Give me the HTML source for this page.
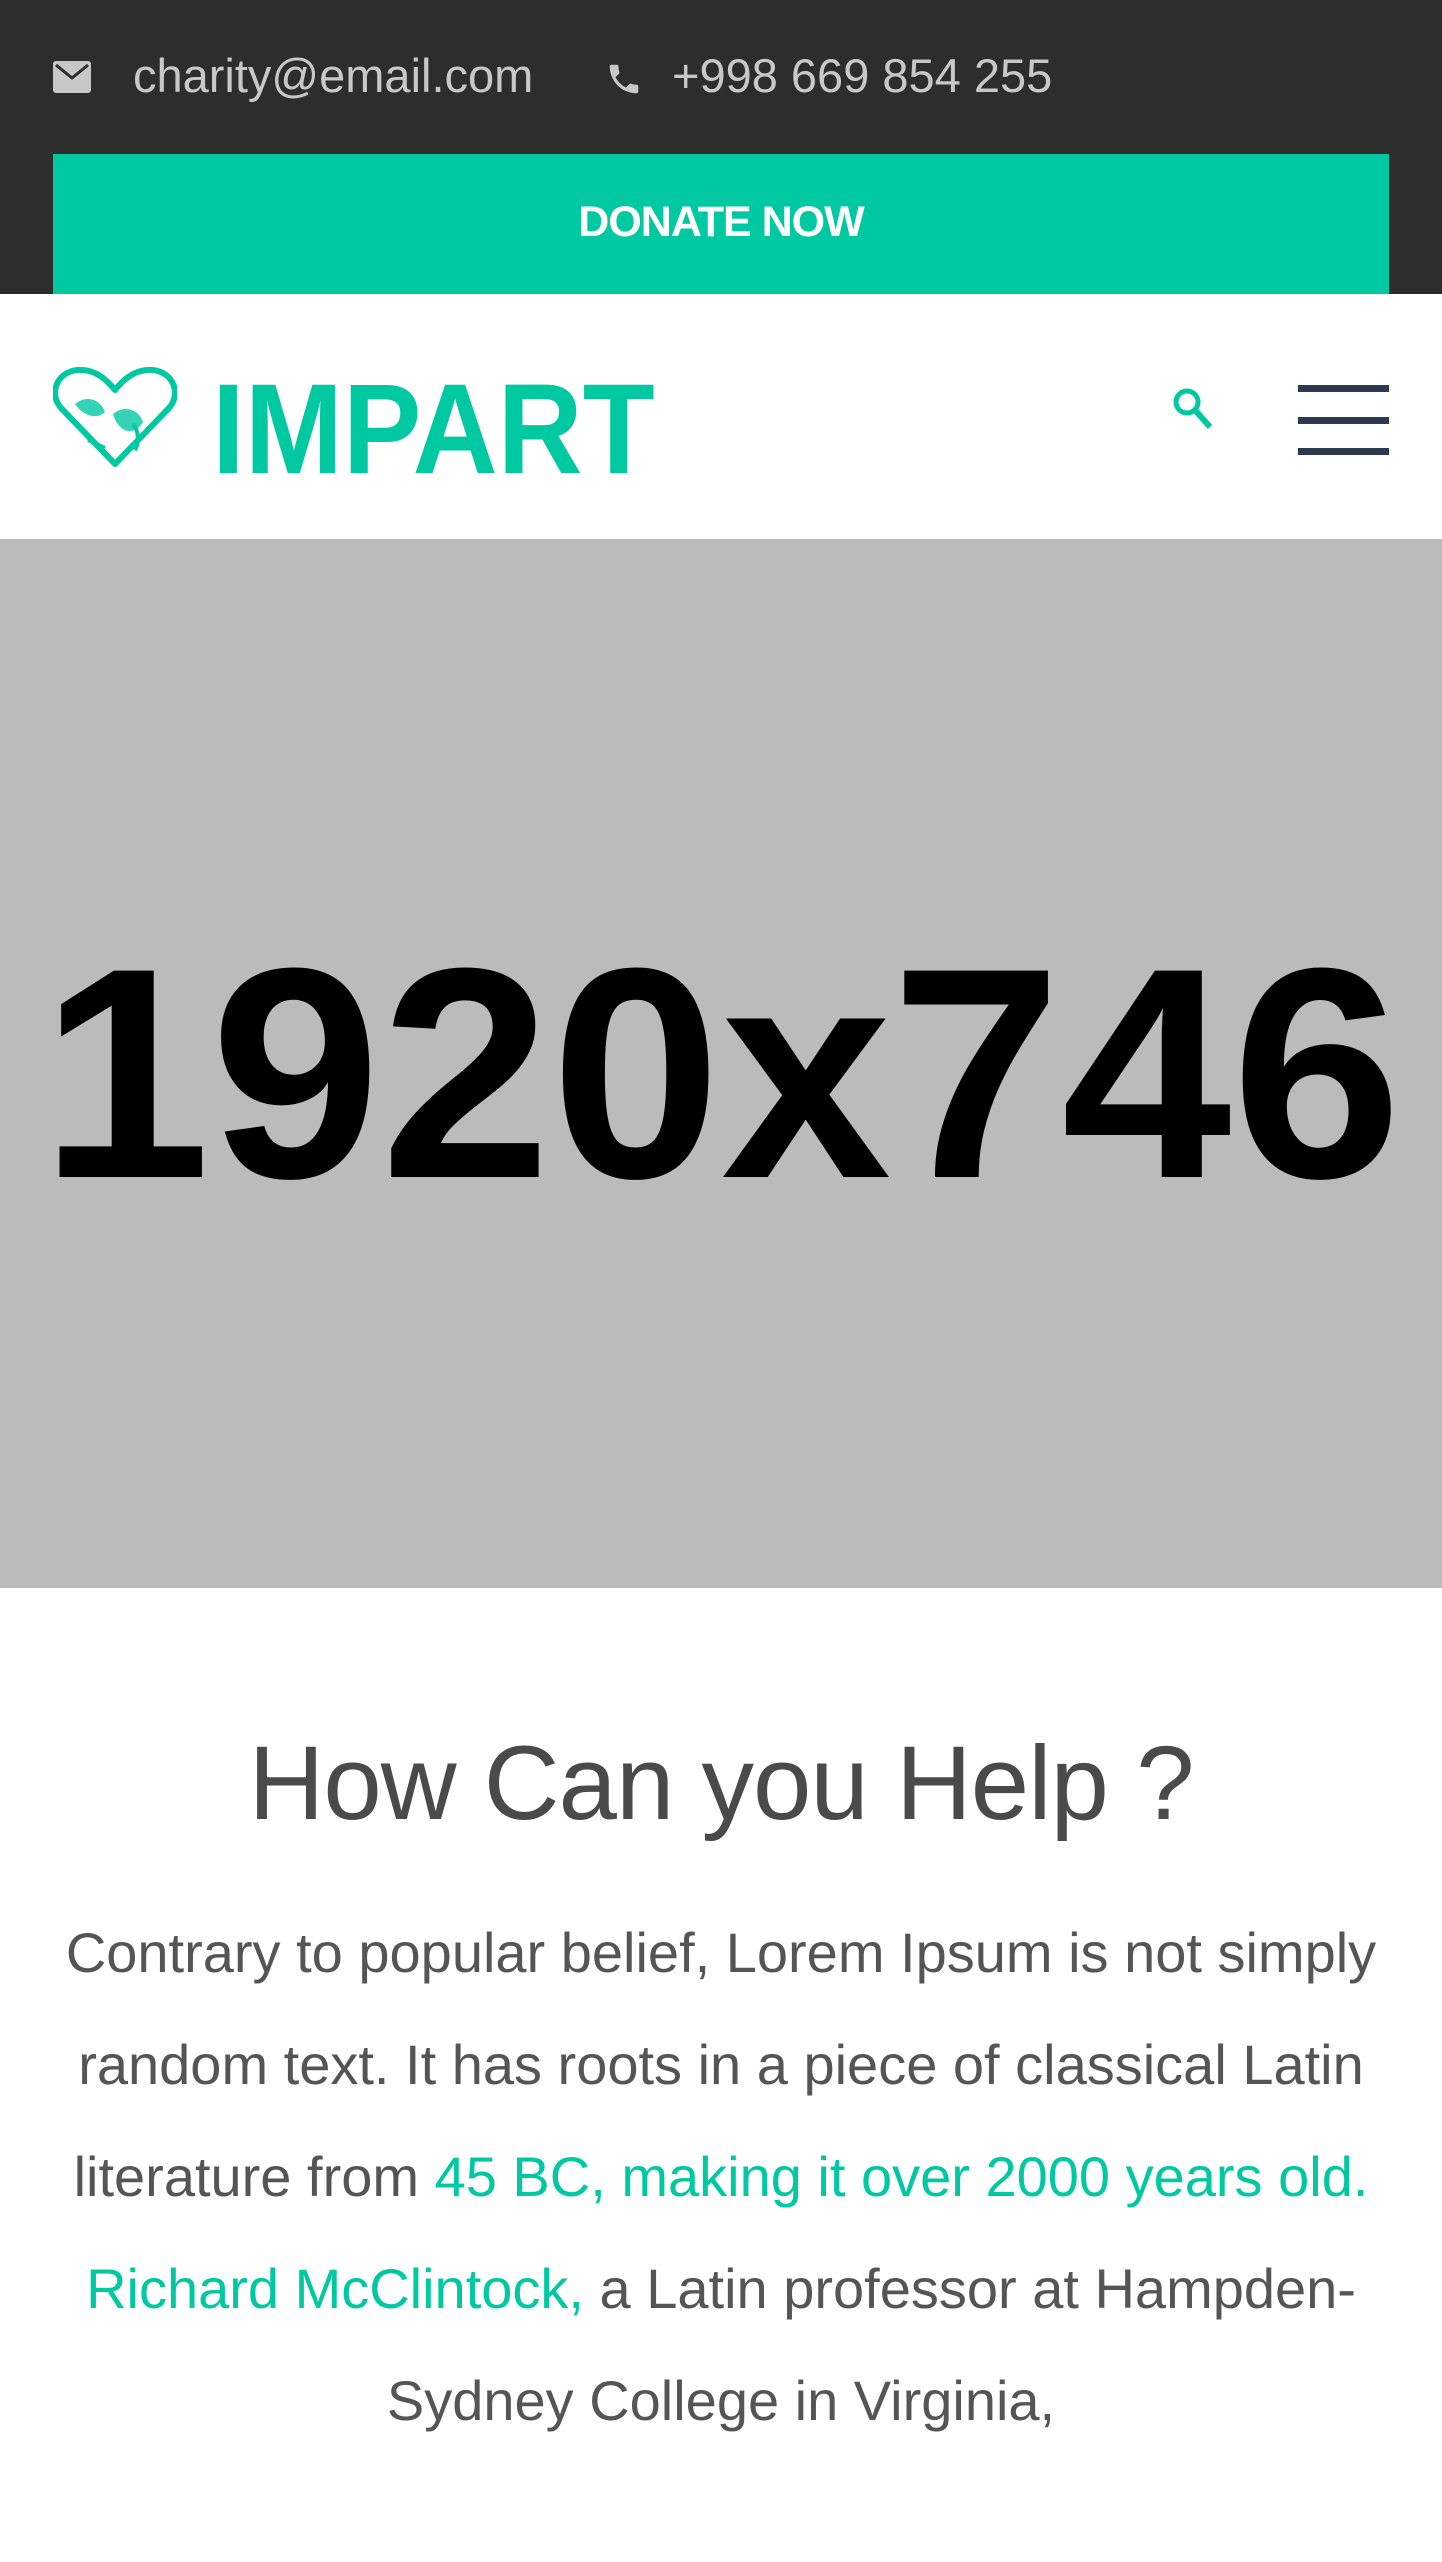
<!DOCTYPE html>
<html><head><meta charset="utf-8"><style>
*{margin:0;padding:0;box-sizing:border-box}
body{width:1442px;height:2562px;background:#fff;font-family:"Liberation Sans",sans-serif;overflow:hidden;position:relative}
.top{position:absolute;left:0;top:0;width:1442px;height:294px;background:#2d2d2d}
.t{position:absolute;color:#c8c8c8;font-size:47px;top:48px}
.btn{position:absolute;left:53px;top:154px;width:1336px;height:140px;background:#00c9a2;color:#fff;font-weight:bold;font-size:43px;text-align:center;line-height:136px;letter-spacing:-1px}
.logo{position:absolute;left:212px;top:366px;font-size:128px;font-weight:900;color:#00c9a2;line-height:1;transform:scaleX(0.92);transform-origin:left top;letter-spacing:0px}
.hb{position:absolute;left:1298px;width:91px;height:7px;background:#2c3a4d}
.img{position:absolute;left:0;top:539px;width:1442px;height:1049px;background:#bbbbbb}
.ph{position:absolute;left:0;width:1442px;text-align:center;font-size:300px;font-weight:bold;color:#000;line-height:1;transform:scaleX(1.02)}
h1{position:absolute;top:1724px;left:0;width:1442px;text-align:center;font-weight:normal;font-size:105px;color:#4a4a4a;letter-spacing:-1px}
p{position:absolute;top:1897px;left:40px;width:1362px;text-align:center;font-size:56px;line-height:112px;color:#555}
p span{color:#00c9a2}
</style></head><body>
<div class="top">
<svg style="position:absolute;left:53px;top:61px" width="38" height="32" viewBox="0 0 38 32"><rect x="0" y="0" width="38" height="32" rx="3" fill="#c8c8c8"/><path d="M3 4 L19 17 L35 4" stroke="#2d2d2d" stroke-width="3" fill="none"/></svg>
<div class="t" style="left:133px">charity@email.com</div>
<svg style="position:absolute;left:605px;top:60px" width="38" height="38" viewBox="0 0 24 24"><path fill="#c8c8c8" d="M6.6 10.8c1.4 2.8 3.8 5.1 6.6 6.6l2.2-2.2c.3-.3.7-.4 1-.2 1.1.4 2.3.6 3.6.6.6 0 1 .4 1 1V20c0 .6-.4 1-1 1C10.6 21 3 13.4 3 4c0-.6.4-1 1-1h3.5c.6 0 1 .4 1 1 0 1.3.2 2.5.6 3.6.1.3 0 .7-.2 1z"/></svg>
<div class="t" style="left:672px">+998 669 854 255</div>
<div class="btn">DONATE NOW</div>
</div>
<svg style="position:absolute;left:53px;top:364px" width="124" height="106" viewBox="0 0 124 106"><path d="M62 100 L8 44 C-6 28 6 4 30 6 C44 7 54 16 62 26 C70 16 80 7 94 6 C118 4 130 28 116 44 Z" fill="none" stroke="#00c9a2" stroke-width="6" stroke-linejoin="round"/><path d="M22 40 C34 30 48 36 52 48 C44 56 30 52 22 40Z M60 50 C72 40 86 46 90 58 C82 72 66 70 60 50Z" fill="#00c9a2" opacity="0.8"/><path d="M35 76 L52 84 M80 60 C86 66 86 80 82 86" stroke="#00c9a2" stroke-width="4" fill="none"/></svg>
<div class="logo">IMPART</div>
<svg style="position:absolute;left:1170px;top:385px" width="48" height="48" viewBox="0 0 48 48"><circle cx="17" cy="17" r="11" fill="none" stroke="#00c9a2" stroke-width="5"/><path d="M25 25 L40 42" stroke="#00c9a2" stroke-width="6"/></svg>
<div class="hb" style="top:385px"></div>
<div class="hb" style="top:417px"></div>
<div class="hb" style="top:448px"></div>
<div class="img"><div class="ph" style="top:384px">1920x746</div></div>
<h1>How Can you Help ?</h1>
<p>Contrary to popular belief, Lorem Ipsum is not simply random text. It has roots in a piece of classical Latin literature from <span>45 BC, making it over 2000 years old. Richard McClintock,</span> a Latin professor at Hampden-Sydney College in Virginia,</p>
</body></html>
